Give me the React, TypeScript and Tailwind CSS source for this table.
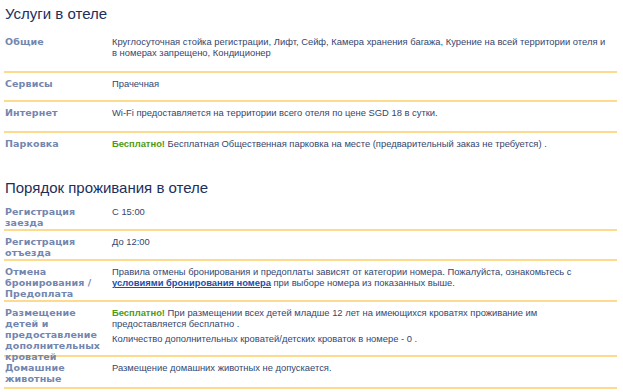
import React from 'react';

type Row = {
  label: string;
  height: string;
  content: React.ReactNode;
};

const Free = () => <span className="font-bold text-[#4b9b14]">Бесплатно!</span>;

const SERVICES: Row[] = [
  {
    label: 'Общие',
    height: 'h-[42px]',
    content: (
      <>
        Круглосуточная стойка регистрации, Лифт, Сейф, Камера хранения багажа, Курение на всей территории отеля и
        <br />в номерах запрещено, Кондиционер
      </>
    ),
  },
  { label: 'Сервисы', height: 'h-[29px]', content: 'Прачечная' },
  {
    label: 'Интернет',
    height: 'h-[31px]',
    content: 'Wi-Fi предоставляется на территории всего отеля по цене SGD 18 в сутки.',
  },
];

const POLICIES: Row[] = [
  { label: 'Регистрация заезда', height: 'h-[30px]', content: 'С 15:00' },
  { label: 'Регистрация отъезда', height: 'h-[30px]', content: 'До 12:00' },
  {
    label: 'Отмена бронирования / Предоплата',
    height: 'h-[41px]',
    content: (
      <>
        Правила отмены бронирования и предоплаты зависят от категории номера. Пожалуйста, ознакомьтесь с{' '}
        <a href="#" className="font-bold text-[#1b4ea8] underline">
          условиями бронирования номера
        </a>{' '}
        при выборе номера из показанных выше.
      </>
    ),
  },
  {
    label: 'Размещение детей и предоставление дополнительных кроватей',
    height: 'h-[55px]',
    content: (
      <>
        <p>
          <Free /> При размещении всех детей младше 12 лет на имеющихся кроватях проживание им
          <br />
          предоставляется бесплатно .
        </p>
        <p className="mt-[4px]">Количество дополнительных кроватей/детских кроваток в номере - 0 .</p>
      </>
    ),
  },
  {
    label: 'Домашние животные',
    height: 'h-[32px]',
    content: 'Размещение домашних животных не допускается.',
  },
];

function InfoRow({ row, last }: { row: Row; last?: boolean }) {
  return (
    <div
      className={`flex pt-[5px] ${row.height} ${last ? '' : 'border-b-2 border-[#fcdb8e]'}`}
    >
      <div className="w-[108px] shrink-0 pl-[1px] pr-1 font-['DejaVu_Sans',sans-serif] text-[9.5px] font-bold leading-[11px] tracking-[0.1px] text-[#7386af]">
        {row.label}
      </div>
      <div className="flex-1 text-[9.4px] leading-[11px] text-[#34466f]">{row.content}</div>
    </div>
  );
}

export default function App() {
  return (
    <div className="w-[623px] h-[392px] overflow-hidden bg-white pl-[4px] pr-[6px] font-['Liberation_Sans',Arial,sans-serif]">
      <h2 className="pt-[4px] pl-[1px] text-[15px] leading-[20px] text-[#1c2f5c]">Услуги в отеле</h2>
      <div className="mt-[7px]">
        {SERVICES.map((row) => (
          <InfoRow key={row.label} row={row} />
        ))}
        <InfoRow
          last
          row={{
            label: 'Парковка',
            height: 'h-[30px]',
            content: (
              <>
                <Free /> Бесплатная Общественная парковка на месте (предварительный заказ не требуется) .
              </>
            ),
          }}
        />
      </div>
      <h2 className="mt-[15px] pl-[1px] text-[15px] leading-[20px] text-[#1c2f5c]">
        Порядок проживания в отеле
      </h2>
      <div className="mt-[3px]">
        {POLICIES.map((row) => (
          <InfoRow key={row.label} row={row} />
        ))}
      </div>
    </div>
  );
}
